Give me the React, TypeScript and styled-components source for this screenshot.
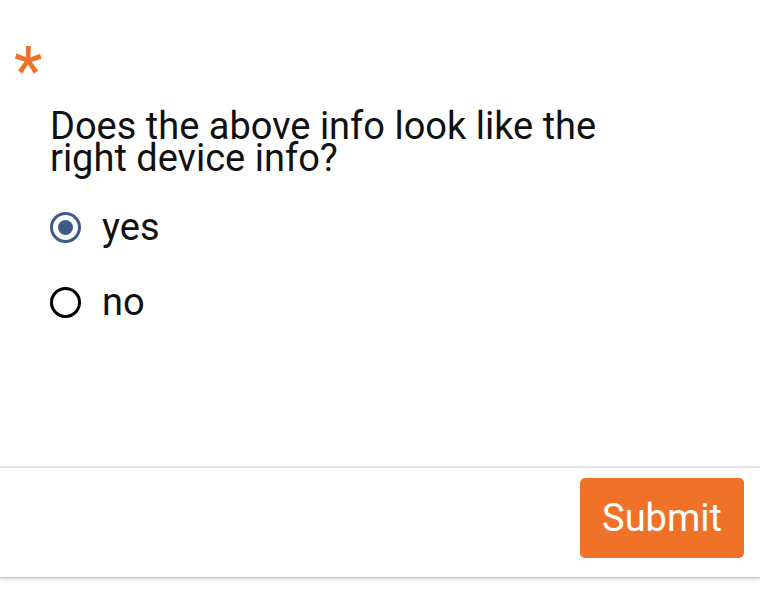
import React, { useState } from "react";
import styled, { createGlobalStyle } from "styled-components";

const Global = createGlobalStyle`
  html, body { margin: 0; padding: 0; background: #fff; }
  body { font-family: Roboto, "Noto Sans", Arial, sans-serif; color: #111; min-height: 600px; }
`;

const Card = styled.div`
  width: 760px;
  background: #fff;
  display: flex;
  flex-direction: column;
`;

const Body = styled.div`
  height: 466px;
  box-sizing: border-box;
  padding: 52px 0 0 0;
  display: flex;
  flex-direction: column;
`;

const Required = styled.div`
  color: #f07228;
  font-size: 66px;
  line-height: 40px;
  height: 40px;
  padding-left: 14px;
  font-weight: 400;
`;

const Question = styled.div`
  margin: 18px 0 0 50px;
  max-width: 600px;
  font-size: 38px;
  line-height: 32px;
  color: #111;
`;

const Options = styled.div`
  margin: 21px 0 0 50px;
  display: flex;
  flex-direction: column;
  gap: 11px;
`;

const Option = styled.label`
  display: flex;
  align-items: center;
  gap: 21px;
  height: 64px;
  font-size: 38px;
  cursor: pointer;
`;

const Ring = styled.span<{ $checked: boolean }>`
  width: 31px;
  height: 31px;
  box-sizing: border-box;
  border-radius: 50%;
  border: 3px solid ${(p) => (p.$checked ? "#3f5b8b" : "#000")};
  display: flex;
  align-items: center;
  justify-content: center;
  &::after {
    content: "";
    width: 15px;
    height: 15px;
    border-radius: 50%;
    background: #3f5b8b;
    display: ${(p) => (p.$checked ? "block" : "none")};
  }
`;

const Footer = styled.div`
  border-top: 2px solid #e6e6e6;
  border-bottom: 1px solid #c4c4c4;
  box-shadow: 0 2px 3px rgba(0, 0, 0, 0.12);
  height: 112px;
  box-sizing: border-box;
  display: flex;
  justify-content: flex-end;
  align-items: flex-start;
  padding: 10px 16px 0 0;
`;

const SubmitButton = styled.button`
  background: #f07228;
  color: #fff;
  border: none;
  border-radius: 5px;
  width: 164px;
  height: 80px;
  font-family: Roboto, "Noto Sans", Arial, sans-serif;
  font-size: 38px;
  cursor: pointer;
`;

export default function App() {
  const [value, setValue] = useState("yes");
  return (
    <>
      <Global />
      <Card>
        <Body>
          <Required>*</Required>
          <Question>Does the above info look like the right device info?</Question>
          <Options>
            {["yes", "no"].map((o) => (
              <Option key={o} onClick={() => setValue(o)}>
                <Ring $checked={value === o} />
                {o}
              </Option>
            ))}
          </Options>
        </Body>
        <Footer>
          <SubmitButton>Submit</SubmitButton>
        </Footer>
      </Card>
    </>
  );
}
